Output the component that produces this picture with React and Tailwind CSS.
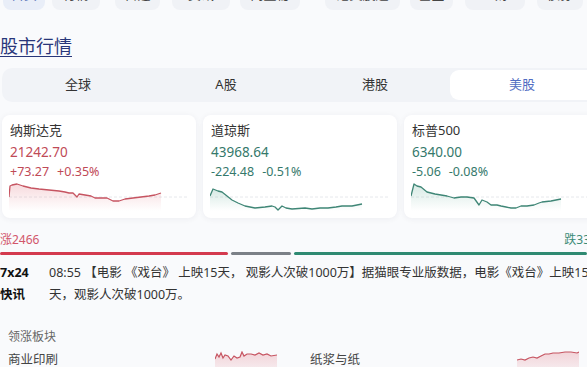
import React from "react";

const pills = [
  { t: "首页", w: "w-[42px]", ml: "ml-[3px]", on: true },
  { t: "行情", w: "w-[48px]", ml: "ml-[7px]" },
  { t: "自选", w: "w-[45px]", ml: "ml-[15px]" },
  { t: "资讯", w: "w-[58px]", ml: "ml-[12px]" },
  { t: "问董秘", w: "w-[60px]", ml: "ml-[10px]" },
  { t: "港美股通", w: "w-[75px]", ml: "ml-[25px]" },
  { t: "基金", w: "w-[43px]", ml: "ml-[10px]" },
  { t: "理财", w: "w-[60px]", ml: "ml-[12px]" },
  { t: "债券", w: "w-[46px]", ml: "ml-[12px]" },
];

const cards = [
  {
    name: "纳斯达克",
    price: "21242.70",
    chg: "+73.27",
    pct: "+0.35%",
    up: true,
    pts: "0,16 1,5 3,4 8,3 14,5 22,7 30,8 40,9 50,10 56,11 60,12 64,12 68,16 70,13 76,14 82,15 86,17 92,17 98,17 104,20 110,20 116,18 124,17 132,16 140,15 146,14 152,12",
  },
  {
    name: "道琼斯",
    price: "43968.64",
    chg: "-224.48",
    pct: "-0.51%",
    pts: "0,15 3,8 8,10 12,11 17,15 22,19 28,22 35,25 45,27 55,26 62,25 65,26 68,29 72,25 76,27 82,28 95,27 102,28 110,27 118,27 126,26 132,25 142,25 152,23",
  },
  {
    name: "标普500",
    price: "6340.00",
    chg: "-5.06",
    pct: "-0.08%",
    pts: "0,15 3,3 6,5 10,6 16,11 24,13 30,14 36,15 43,17 50,16 56,16 63,17 68,24 71,19 76,21 80,24 86,24 90,25 95,26 100,27 105,27 110,25 116,25 123,24 128,22 131,21 140,20 150,18",
  },
];

function Spark({ pts, up, id }) {
  const line = up ? "#c65461" : "#3f8676";
  const fill = up ? "#e27b86" : "#6fb39f";
  const last = pts.split(" ").pop().split(",")[0];
  return (
    <svg width="178" height="30" className="block">
      <defs>
        <linearGradient id={id} x1="0" y1="0" x2="0" y2="1">
          <stop offset="0" stopColor={fill} stopOpacity="0.28" />
          <stop offset="1" stopColor={fill} stopOpacity="0" />
        </linearGradient>
      </defs>
      <line x1="0" y1="16" x2="178" y2="16" stroke="#e6e8ec" strokeWidth="1" strokeDasharray="3 2" />
      <polygon points={`0,30 ${pts} ${last},30`} fill={`url(#${id})`} />
      <polyline points={pts} fill="none" stroke={line} strokeWidth="1.3" strokeLinejoin="round" />
    </svg>
  );
}

function Mini({ pts, id, w = 62 }) {
  const last = pts.split(" ").pop().split(",")[0];
  return (
    <svg width={w} height="18" className="block">
      <defs>
        <linearGradient id={id} x1="0" y1="0" x2="0" y2="1">
          <stop offset="0" stopColor="#e27b86" stopOpacity="0.3" />
          <stop offset="1" stopColor="#e27b86" stopOpacity="0.12" />
        </linearGradient>
      </defs>
      <polygon points={`0,18 ${pts} ${last},18`} fill={`url(#${id})`} />
      <polyline points={pts} fill="none" stroke="#c65461" strokeWidth="1.2" />
    </svg>
  );
}

export default function App() {
  return (
    <div className="w-[587px] h-[367px] overflow-hidden bg-[#f9fafc] font-['Noto_Sans','Noto_Sans_CJK_SC',sans-serif] text-[#333]">
      <div className="flex h-[26px] -mt-[16px]">
        {pills.map((p) => (
          <div
            key={p.t}
            className={`${p.w} ${p.ml} shrink-0 h-[26px] rounded-[8px] flex items-start justify-center pt-[2px] text-[13px] leading-[16px] ${
              p.on ? "bg-[#e9eef8] text-[#5a74b8]" : "bg-[#f0f2f6] text-[#444]"
            }`}
          >
            {p.t}
          </div>
        ))}
      </div>

      <div className="mt-[24px] h-[24px] text-[18px] leading-[24px] text-[#28367a] underline underline-offset-[3px] decoration-[1px]">
        股市行情
      </div>

      <div className="mt-[10px] ml-[2px] w-[600px] h-[34px] rounded-[10px] bg-[#f1f3f7] flex p-[2px] text-[13px]">
        <div className="w-[148px] flex items-center justify-center text-[#333]">全球</div>
        <div className="w-[148px] flex items-center justify-center text-[#333]">A股</div>
        <div className="w-[150px] flex items-center justify-center text-[#333]">港股</div>
        <div className="flex-1 rounded-[9px] bg-white flex items-center justify-center text-[#526dc2] pr-[6px]">美股</div>
      </div>

      <div className="mt-[13px] ml-[2px] flex gap-[7px]">
        {cards.map((c, i) => (
          <div
            key={c.name}
            className="w-[194px] h-[103px] shrink-0 rounded-[8px] bg-white shadow-[0_1px_6px_rgba(30,40,70,0.06)] px-[8px] pt-[5px]"
          >
            <div className="text-[13px] leading-[20px] text-[#333]">{c.name}</div>
            <div className={`mt-[2px] text-[13.5px] leading-[20px] ${c.up ? "text-[#bf4a57]" : "text-[#35796b]"}`}>
              {c.price}
            </div>
            <div className={`text-[12.5px] leading-[19px] flex gap-[8px] ${c.up ? "text-[#bf4a57]" : "text-[#35796b]"}`}>
              <span>{c.chg}</span>
              <span>{c.pct}</span>
            </div>
            <div className="-ml-[1px]">
              <Spark pts={c.pts} up={c.up} id={`g${i}`} />
            </div>
          </div>
        ))}
      </div>

      <div className="mt-[14px] h-[16px] flex justify-between items-center text-[12px] leading-[16px]">
        <span className="text-[#d2566b]">涨2466</span>
        <span className="text-[#3b8a77] -mr-[3px]">跌33</span>
      </div>
      <div className="mt-[4px] h-[3px] flex gap-[3px]">
        <div className="w-[228px] rounded-full bg-[#d43a4e]" />
        <div className="w-[60px] rounded-full bg-[#7b8087]" />
        <div className="flex-1 rounded-full bg-[#2f8a72]" />
      </div>

      <div className="mt-[7px] text-[12.5px] leading-[22px] [text-spacing-trim:space-all]">
        <div className="flex">
          <span className="w-[49px] shrink-0 font-bold text-[#111]">7x24</span>
          <span className="whitespace-nowrap text-[#333]">
            08:55 【电影 《戏台》 上映15天， 观影人次破1000万】据猫眼专业版数据，电影《戏台》上映15
          </span>
        </div>
        <div className="flex">
          <span className="w-[49px] shrink-0 font-bold text-[#111]">快讯</span>
          <span className="text-[#333]">天，观影人次破1000万。</span>
        </div>
      </div>

      <div className="mt-[22px] pl-[8px] text-[12px] leading-[18px] text-[#666]">领涨板块</div>

      <div className="mt-[5px] flex h-[18px] text-[12.5px] leading-[18px] text-[#444]">
        <div className="w-[310px] shrink-0 flex pl-[8px]">
          <span className="w-[207px]">商业印刷</span>
          <Mini id="m1" pts="0,8 2,3 4,6 6,2 8,7 10,4 13,5 16,9 19,5 22,7 25,6 27,1 29,5 32,3 36,3 40,4 44,2 48,4 52,3 56,5 62,4" />
        </div>
        <div className="flex">
          <span className="w-[207px]">纸浆与纸</span>
          <Mini id="m2" pts="0,9 4,8 8,9 12,7 16,6 20,7 24,5 28,3 32,3 36,2 42,2 48,1 54,1 60,2 62,1" />
        </div>
      </div>
    </div>
  );
}
